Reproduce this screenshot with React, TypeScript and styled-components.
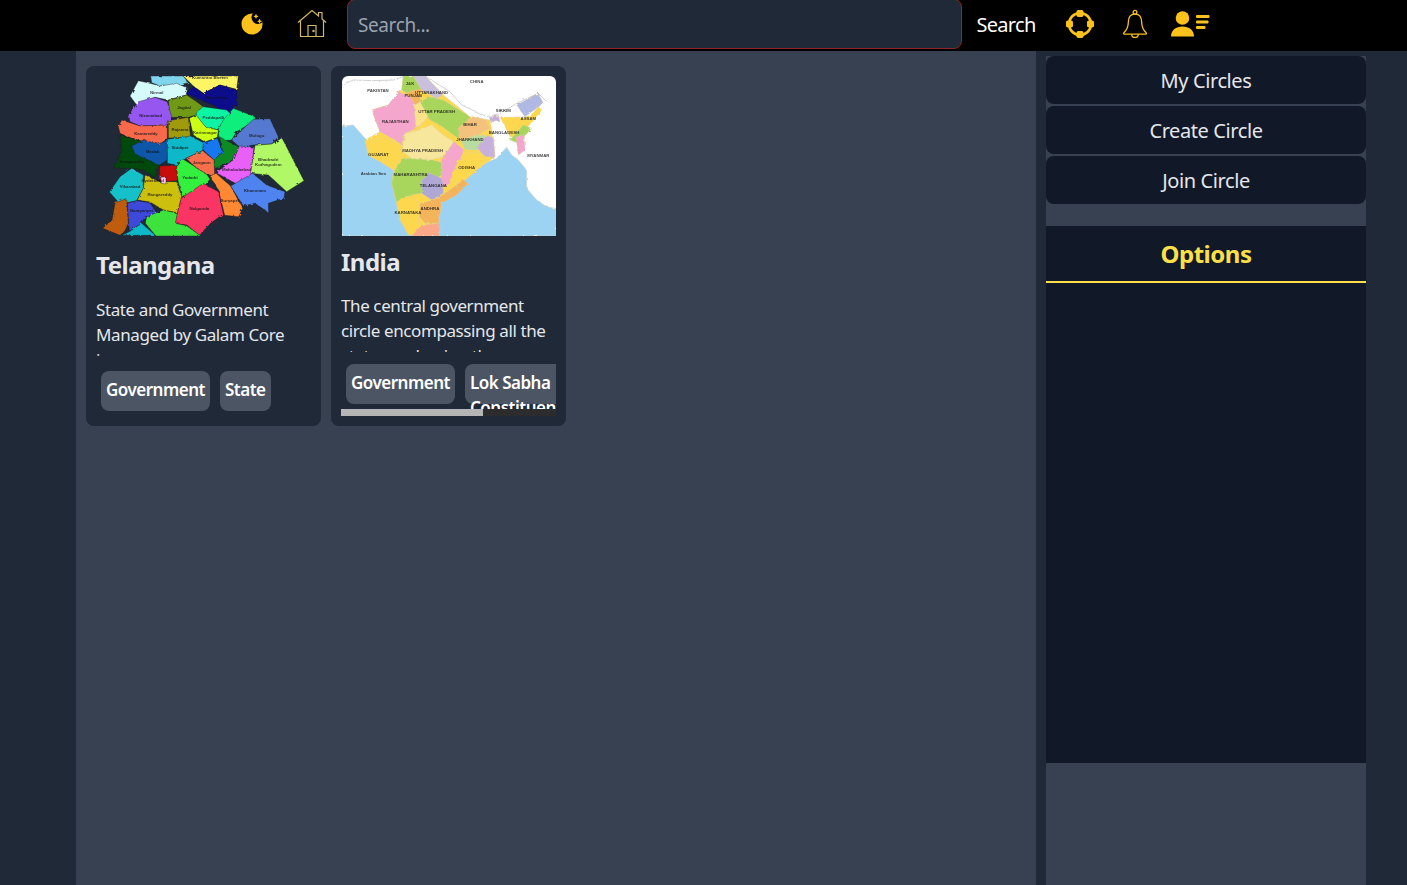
import type { ReactNode } from 'react';
import styled, { createGlobalStyle } from 'styled-components';

const GlobalStyle = createGlobalStyle`
  html, body {
    margin: 0;
    height: 100%;
    overflow: hidden;
    background: #1f2937;
    font-family: 'Noto Sans', 'Open Sans', sans-serif;
  }
  * {
    box-sizing: border-box;
  }
`;

type Region = { fill: string; points: string };
type Label = { x: number; y: number; text: string };

const telanganaRegions: Region[] = [
  { fill: '#7fd4ee', points: '212,48 310,48 325,68 300,74 240,78 215,68' },
  { fill: '#d6fbfb', points: '150,108 175,62 210,70 240,78 290,70 322,84 320,104 265,120 225,112 170,135' },
  { fill: '#fdf566', points: '310,48 475,48 470,88 420,75 370,100 340,78' },
  { fill: '#0a0f8c', points: '318,100 340,80 370,100 420,75 470,90 472,130 445,165 400,135 350,115' },
  { fill: '#6f9a14', points: '265,122 320,105 350,125 372,142 348,165 325,172 270,172' },
  { fill: '#9656f0', points: '145,165 175,125 225,112 262,125 275,170 262,195 180,198 150,185' },
  { fill: '#0cf5a4', points: '350,155 370,140 440,150 455,165 425,190 415,208 380,205 348,168' },
  { fill: '#10ee7c', points: '415,208 430,180 460,145 525,170 525,182 470,215 455,240 430,242 416,232' },
  { fill: '#5579d0', points: '455,240 480,215 520,178 570,176 595,230 575,252 520,255 480,262' },
  { fill: '#ccff12', points: '328,175 348,165 378,202 415,210 412,232 375,246 340,225' },
  { fill: '#a09a10', points: '265,182 325,172 332,232 265,234' },
  { fill: '#f8674c', points: '115,200 125,180 180,198 262,195 262,235 235,258 155,235 120,220' },
  { fill: '#04480c', points: '120,225 155,235 235,258 238,315 225,352 190,330 150,325 102,325 125,272' },
  { fill: '#0856a8', points: '155,258 190,240 235,252 265,240 262,300 238,316 200,298 165,282' },
  { fill: '#10b8c8', points: '262,238 332,228 370,248 368,272 318,295 288,315 262,310' },
  { fill: '#1878f0', points: '370,250 412,234 428,276 402,300 370,270' },
  { fill: '#0d8a24', points: '418,230 478,262 462,298 404,326 402,300 428,276' },
  { fill: '#e860f8', points: '478,258 522,262 512,350 470,372 408,338 462,298' },
  { fill: '#b0f866', points: '525,256 575,252 606,234 640,300 672,362 620,395 565,345 512,340' },
  { fill: '#f8704c', points: '318,295 368,272 402,300 404,345 382,345 345,320' },
  { fill: '#c80808', points: '238,318 290,315 294,362 240,365' },
  { fill: '#30f03c', points: '290,320 310,298 345,320 382,345 390,358 368,385 320,405 306,410 294,362' },
  { fill: '#ff8830', points: '390,348 408,340 452,378 488,445 476,470 434,466 416,392' },
  { fill: '#4f84f0', points: '452,378 518,340 560,375 615,395 612,414 565,430 566,458 525,430 490,438' },
  { fill: '#18c0c8', points: '88,396 120,350 155,325 190,345 190,385 170,422 120,432' },
  { fill: '#ccc008', points: '172,420 190,385 195,345 240,365 290,365 305,410 292,458 250,450 210,426' },
  { fill: '#f83464', points: '284,490 304,414 370,370 415,395 430,462 392,490 358,526 320,495' },
  { fill: '#c05c08', points: '68,505 96,480 105,430 140,415 145,490 135,512 120,526' },
  { fill: '#3c48d8', points: '142,430 170,422 210,428 234,465 195,470 185,490 148,514' },
  { fill: '#10b8c8', points: '126,526 150,514 185,490 226,526' },
  { fill: '#3ce23c', points: '196,490 200,470 250,450 292,460 286,490 320,497 362,528 228,528' },
  { fill: '#f4c4f4', points: '242,352 258,350 258,372 244,370' },
];

const telanganaLabels: Label[] = [
  { x: 390, y: 58, text: 'Kumuram Bheem' },
  { x: 230, y: 102, text: 'Nirmal' },
  { x: 410, y: 117, text: 'Mancherial' },
  { x: 312, y: 146, text: 'Jagtial' },
  { x: 212, y: 170, text: 'Nizamabad' },
  { x: 400, y: 178, text: 'Peddapalli' },
  { x: 375, y: 221, text: 'Karimnagar' },
  { x: 300, y: 212, text: 'Rajanna' },
  { x: 198, y: 224, text: 'Kamareddy' },
  { x: 530, y: 232, text: 'Mulugu' },
  { x: 300, y: 266, text: 'Siddipet' },
  { x: 218, y: 278, text: 'Medak' },
  { x: 155, y: 310, text: 'Sangareddy' },
  { x: 365, y: 312, text: 'Jangaon' },
  { x: 565, y: 302, text: 'Bhadradri' },
  { x: 565, y: 318, text: 'Kothagudem' },
  { x: 470, y: 332, text: 'Mahabubabad' },
  { x: 330, y: 358, text: 'Yadadri' },
  { x: 218, y: 367, text: 'Hyderabad' },
  { x: 150, y: 383, text: 'Vikarabad' },
  { x: 240, y: 408, text: 'Rangareddy' },
  { x: 525, y: 395, text: 'Khammam' },
  { x: 450, y: 426, text: 'Suryapet' },
  { x: 358, y: 450, text: 'Nalgonda' },
  { x: 185, y: 457, text: 'Narayanpet' },
];

const indiaRegions: Region[] = [
  { fill: '#9dd3f2', points: '36,198 70,195 105,235 180,300 300,330 440,320 500,295 530,262 545,285 565,300 590,330 590,385 620,420 650,440 678,445 678,528 36,528' },
  { fill: '#fdd850', points: '220,48 285,48 340,105 420,170 480,180 490,235 495,290 440,330 395,370 345,400 335,430 325,490 300,528 245,528 210,480 185,370 190,330 115,285 105,240 150,215 125,150 175,135 205,95 215,90' },
  { fill: '#a8d65c', points: '220,48 250,48 275,90 235,100 215,90' },
  { fill: '#c8c0dc', points: '250,48 285,48 340,105 320,115 275,90' },
  { fill: '#f4b45c', points: '225,100 275,85 270,125 250,140 225,115' },
  { fill: '#f4a6cc', points: '125,150 175,135 205,95 240,110 285,180 260,205 225,220 215,255 195,240 150,215' },
  { fill: '#fbe38a', points: '252,135 290,120 305,150 285,182 258,205' },
  { fill: '#a8d65c', points: '270,125 300,110 340,120 420,170 385,235 370,225 330,195 300,180' },
  { fill: '#f6e79c', points: '225,220 260,212 305,195 340,225 372,245 340,290 300,300 250,300 215,272' },
  { fill: '#fdd850', points: '105,240 165,235 210,250 215,285 190,330 160,310 115,285' },
  { fill: '#a8d65c', points: '185,370 195,330 220,295 300,300 335,305 335,345 300,370 275,400 240,405 200,430' },
  { fill: '#f4a6cc', points: '335,300 372,245 402,270 375,330 360,370 335,385' },
  { fill: '#fdd850', points: '360,360 385,300 425,275 460,280 470,300 440,330 395,370' },
  { fill: '#f4c27c', points: '385,205 425,170 470,180 480,205 440,225 390,240' },
  { fill: '#b8dca0', points: '392,240 440,228 470,225 440,270 405,268' },
  { fill: '#c8b0dc', points: '440,262 470,225 490,235 495,290 465,290' },
  { fill: '#b0a8d4', points: '275,360 300,340 335,355 340,400 305,420 275,400' },
  { fill: '#f4b45c', points: '270,430 310,420 345,400 400,360 415,370 380,405 335,430 325,490 285,490 268,470' },
  { fill: '#fdd850', points: '200,425 240,405 270,430 265,490 285,495 255,525 235,525 210,480' },
  { fill: '#fba888', points: '275,495 330,490 328,528 245,528' },
  { fill: '#c8b0dc', points: '478,172 505,165 510,185 482,185' },
  { fill: '#fdd850', points: '510,172 600,170 625,140 635,150 590,205 540,230 520,190' },
  { fill: '#b0b8e4', points: '560,135 625,100 640,130 585,170' },
  { fill: '#a8d65c', points: '540,240 580,195 605,205 565,250' },
  { fill: '#f4a6cc', points: '558,232 582,222 585,270 565,285' },
];

const indiaLabels: Label[] = [
  { x: 440, y: 68, text: 'CHINA' },
  { x: 144, y: 97, text: 'PAKISTAN' },
  { x: 240, y: 75, text: 'J&K' },
  { x: 305, y: 103, text: 'UTTARAKHAND' },
  { x: 250, y: 110, text: 'PUNJAB' },
  { x: 320, y: 160, text: 'UTTAR PRADESH' },
  { x: 196, y: 188, text: 'RAJASTHAN' },
  { x: 278, y: 275, text: 'MADHYA PRADESH' },
  { x: 145, y: 289, text: 'GUJARAT' },
  { x: 242, y: 349, text: 'MAHARASHTRA' },
  { x: 410, y: 326, text: 'ODISHA' },
  { x: 310, y: 380, text: 'TELANGANA' },
  { x: 300, y: 450, text: 'ANDHRA' },
  { x: 234, y: 463, text: 'KARNATAKA' },
  { x: 625, y: 292, text: 'MYANMAR' },
  { x: 420, y: 243, text: 'JHARKHAND' },
  { x: 420, y: 198, text: 'BIHAR' },
  { x: 130, y: 345, text: 'Arabian Sea' },
  { x: 520, y: 155, text: 'SIKKIM' },
  { x: 522, y: 222, text: 'BANGLADESH' },
  { x: 595, y: 180, text: 'ASSAM' },
];

function RegionMap({
  regions,
  labels,
  viewBox,
  mapWidth,
  edge,
  background,
  children,
}: {
  regions: Region[];
  labels: Label[];
  viewBox: string;
  mapWidth: number;
  edge: string;
  background?: string;
  children?: ReactNode;
}) {
  return (
    <MapFrame $background={background} $width={mapWidth}>
      <svg viewBox={viewBox} width={mapWidth} height="160" preserveAspectRatio="none">
        <defs>
          <filter id="rough-edge" x="-5%" y="-5%" width="110%" height="110%">
            <feTurbulence type="fractalNoise" baseFrequency="0.09" numOctaves="2" seed="4" />
            <feDisplacementMap in="SourceGraphic" scale="9" />
          </filter>
        </defs>
        <g filter="url(#rough-edge)">
          {regions.map((region, index) => (
            <polygon key={index} points={region.points} fill={region.fill} stroke={edge} strokeWidth="1.2" />
          ))}
          {children}
        </g>
        {labels.map((label) => (
          <MapLabel key={label.text} x={label.x} y={label.y}>
            {label.text}
          </MapLabel>
        ))}
      </svg>
    </MapFrame>
  );
}

function MoonIcon() {
  return (
    <svg width="24" height="24" viewBox="0 0 24 24" fill="#fcc21b">
      <path d="M12.84 1.55 A10.5 10.5 0 1 0 22.36 10.33 A6.5 6.5 0 0 1 12.84 1.55 Z" />
      <path d="M16 1.8 l.8 1.8 1.8 .8 -1.8 .8 -.8 1.8 -.8 -1.8 -1.8 -.8 1.8 -.8 Z" />
      <path d="M19.6 6.6 l.8 1.8 1.8 .8 -1.8 .8 -.8 1.8 -.8 -1.8 -1.8 -.8 1.8 -.8 Z" />
    </svg>
  );
}

function HomeIcon() {
  return (
    <svg width="30" height="30" viewBox="0 0 30 30" fill="none" stroke="#d4b86a" strokeWidth="1.2">
      <path d="M1 13.5 L15 1.5 L21.5 7 V3.5 H25 V10 L29 13.5" />
      <path d="M3.5 11.5 V27.5 H26.5 V11.5" />
      <path d="M11 27.5 V16.5 H19 V27.5" />
      <circle cx="16.5" cy="22" r="0.6" fill="#d4b86a" />
    </svg>
  );
}

function CirclesIcon() {
  return (
    <svg width="30" height="30" viewBox="0 0 30 30" fill="#fcc21b" stroke="none">
      <circle cx="15" cy="15" r="11" fill="none" stroke="#fcc21b" strokeWidth="2.6" />
      <rect x="11.5" y="1" width="7" height="7" rx="1.8" />
      <rect x="11.5" y="22" width="7" height="7" rx="1.8" />
      <rect x="1" y="11.5" width="7" height="7" rx="1.8" />
      <rect x="22" y="11.5" width="7" height="7" rx="1.8" />
    </svg>
  );
}

function BellIcon() {
  return (
    <svg width="26" height="30" viewBox="0 0 28 32" fill="none" stroke="#fcc21b" strokeWidth="1.4">
      <circle cx="14" cy="3.3" r="2" />
      <path d="M14 5.3 C8.5 5.3 6.8 9.5 6.8 14 C6.8 19 5 22.5 2 25.5 C1.3 26.5 2 27 3 27 H25 C26 27 26.7 26.5 26 25.5 C23 22.5 21.2 19 21.2 14 C21.2 9.5 19.5 5.3 14 5.3 Z" />
      <path d="M10.5 27 A3.5 3.5 0 0 0 17.5 27" />
    </svg>
  );
}

function UserListIcon() {
  return (
    <svg width="40" height="26" viewBox="0 0 40 26" fill="#fcc21b">
      <circle cx="12.5" cy="7" r="6.8" />
      <path d="M1 25.5 C1 19 6 15.5 12.5 15.5 C19 15.5 24 19 24 25.5 Z" />
      <rect x="26" y="4" width="13.5" height="3" rx="1" />
      <rect x="26" y="9.5" width="12.5" height="3" rx="1" />
      <rect x="26" y="15" width="9.5" height="3" rx="1" />
    </svg>
  );
}

function App() {
  return (
    <Page>
      <GlobalStyle />
      <Header>
        <IconButton>
          <MoonIcon />
        </IconButton>
        <IconButton>
          <HomeIcon />
        </IconButton>
        <SearchInput placeholder="Search..." />
        <SearchButton>Search</SearchButton>
        <NavIcon>
          <CirclesIcon />
        </NavIcon>
        <NavIcon>
          <BellIcon />
        </NavIcon>
        <NavIcon>
          <UserListIcon />
        </NavIcon>
      </Header>
      <Body>
        <Main>
          <Card>
            <RegionMap
              regions={telanganaRegions}
              labels={telanganaLabels}
              viewBox="48 48 645 480"
              mapWidth={215}
              edge="#1a1a1a"
            />
            <CardTitle>Telangana</CardTitle>
            <CardDescription>
              State and Government Managed by Galam Core
              <br />
              i
            </CardDescription>
            <TagArea>
              <TagScroller>
                <TagRow>
                  <Tag>Government</Tag>
                  <Tag>State</Tag>
                </TagRow>
              </TagScroller>
            </TagArea>
          </Card>
          <Card>
            <RegionMap
              regions={indiaRegions}
              labels={indiaLabels}
              viewBox="36 48 642 480"
              mapWidth={214}
              edge="#d8d0a8"
              background="#ffffff"
            >
              <polyline
                points="285,48 360,95 395,135 470,170 510,160 560,130 625,100 650,125"
                fill="none"
                stroke="#777"
                strokeWidth="1"
              />
              <polyline points="36,75 70,60 130,62 190,60 220,50" fill="none" stroke="#777" strokeWidth="1" />
            </RegionMap>
            <CardTitle>India</CardTitle>
            <CardDescription>The central government circle encompassing all the states and union the</CardDescription>
            <TagArea>
              <TagScroller>
                <TagRow $width={325}>
                  <Tag>Government</Tag>
                  <Tag>
                    Lok Sabha
                    <br />
                    Constituency
                  </Tag>
                </TagRow>
              </TagScroller>
              <ScrollTrack>
                <ScrollThumb style={{ width: `${(215 / 325) * 100}%` }} />
              </ScrollTrack>
            </TagArea>
          </Card>
        </Main>
        <Sidebar>
          <SideButtons>
            <SideButton>My Circles</SideButton>
            <SideButton>Create Circle</SideButton>
            <SideButton>Join Circle</SideButton>
          </SideButtons>
          <OptionsPanel>
            <OptionsTitle>Options</OptionsTitle>
          </OptionsPanel>
        </Sidebar>
      </Body>
    </Page>
  );
}

export default App;

const Page = styled.div`
  height: 100vh;
  display: flex;
  flex-direction: column;
  background: #1f2937;
`;

const Header = styled.header`
  height: 51px;
  flex-shrink: 0;
  display: flex;
  align-items: center;
  padding: 0 0 3px 222px;
  background: #000;
`;

const IconButton = styled.div`
  width: 60px;
  height: 48px;
  display: flex;
  align-items: center;
  justify-content: center;
`;

const SearchInput = styled.input`
  width: 615px;
  height: 50px;
  margin: 0 0 0 5px;
  padding: 2px 10px 0;
  background: #1f2937;
  border: 1px solid #8f2525;
  border-radius: 8px;
  color: #fff;
  font: inherit;
  font-size: 19px;
  letter-spacing: -0.4px;
  outline: none;

  &::placeholder {
    color: #9ca3af;
    opacity: 1;
  }
`;

const SearchButton = styled.div`
  width: 88px;
  margin-right: 2.5px;
  text-align: center;
  color: #fff;
  font-size: 20px;
  letter-spacing: -0.7px;
`;

const NavIcon = styled.div`
  width: 55px;
  height: 48px;
  display: flex;
  align-items: center;
  justify-content: center;
`;

const Body = styled.div`
  flex: 1;
  min-height: 0;
  display: flex;
  gap: 10px;
  padding-left: 76px;
`;

const Main = styled.main`
  width: 960px;
  display: flex;
  align-items: flex-start;
  gap: 10px;
  padding: 15px 10px;
  background: #374151;
`;

const Card = styled.article`
  width: 235px;
  height: 360px;
  display: flex;
  flex-direction: column;
  justify-content: space-between;
  padding: 10px;
  background: #1f2937;
  border-radius: 8px;
`;

const MapFrame = styled.div<{ $background?: string; $width: number }>`
  width: ${(props) => props.$width}px;
  height: 160px;
  flex-shrink: 0;
  align-self: center;
  border-radius: 6px 6px 0 0;
  overflow: hidden;
  background: ${(props) => props.$background ?? 'transparent'};

  svg {
    display: block;
  }
`;

const MapLabel = styled.text`
  font-family: 'Liberation Sans', sans-serif;
  font-size: 13px;
  font-weight: 700;
  text-anchor: middle;
  fill: #111;
  opacity: 0.8;
`;

const CardTitle = styled.h3`
  margin: 0;
  height: 32px;
  color: #e5e7eb;
  font-size: 24px;
  line-height: 32px;
  font-weight: 700;
  letter-spacing: -0.5px;
`;

const CardDescription = styled.p`
  margin: 0 0 -3px;
  height: 63px;
  padding-top: 4px;
  overflow: hidden;
  color: #e5e7eb;
  font-size: 17px;
  line-height: 25px;
  letter-spacing: -0.4px;
`;

const TagArea = styled.div`
  flex-shrink: 0;
`;

const TagScroller = styled.div`
  overflow: hidden;
`;

const TagRow = styled.div<{ $width?: number }>`
  display: flex;
  gap: 10px;
  height: 50px;
  padding: 5px;
  width: ${(props) => (props.$width ? `${props.$width}px` : 'auto')};
`;

const Tag = styled.div`
  height: 40px;
  flex-shrink: 0;
  padding: 6px 5px 0;
  background: #4b5563;
  border-radius: 8px;
  color: #fff;
  font-size: 17px;
  line-height: 25px;
  font-weight: 600;
  letter-spacing: -0.5px;
`;

const ScrollTrack = styled.div`
  height: 7px;
  background: #2c2c2c;
`;

const ScrollThumb = styled.div`
  height: 100%;
  background: #b5b5b5;
`;

const Sidebar = styled.aside`
  width: 320px;
  margin-top: 5px;
  background: #374151;
`;

const SideButtons = styled.div`
  display: flex;
  flex-direction: column;
  gap: 2px;
`;

const SideButton = styled.div`
  height: 48px;
  display: flex;
  align-items: center;
  justify-content: center;
  background: #111827;
  border-radius: 8px;
  color: #e5e7eb;
  font-size: 20px;
  letter-spacing: -0.4px;
`;

const OptionsPanel = styled.section`
  height: 537px;
  margin-top: 22px;
  background: #111827;
`;

const OptionsTitle = styled.h2`
  margin: 0;
  height: 57px;
  display: flex;
  align-items: center;
  justify-content: center;
  border-bottom: 2px solid #fde047;
  color: #fde047;
  font-size: 24px;
  font-weight: 700;
  letter-spacing: -0.5px;
`;
